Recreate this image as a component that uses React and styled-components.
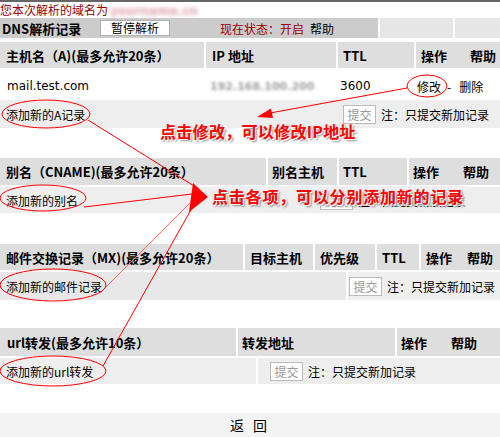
import React from 'react';
import styled, { createGlobalStyle } from 'styled-components';

const GlobalStyle = createGlobalStyle`
  html, body {
    margin: 0;
    padding: 0;
    background: #ffffff;
  }
  body {
    font-family: "Noto Sans CJK SC", "DejaVu Sans", sans-serif;
    font-size: 12px;
    color: #000;
  }
`;

const Page = styled.div`
  position: relative;
  width: 500px;
  height: 437px;
  overflow: hidden;
`;

const TopRule = styled.div`
  height: 2px;
  background: #666666;
`;

const DomainLine = styled.div`
  height: 16px;
  line-height: 16px;
  color: #990000;
  white-space: nowrap;
`;

const Blurred = styled.span`
  display: inline-block;
  font-family: "DejaVu Sans", sans-serif;
  font-size: ${(p) => p.$size || 12}px;
  font-weight: 700;
  color: ${(p) => p.$color};
  filter: blur(${(p) => p.$blur || 1.5}px);
  margin-left: ${(p) => p.$offset || 0}px;
`;

const StatusBar = styled.div`
  display: grid;
  grid-template-columns: 378px 73px 1fr;
  column-gap: 2px;
  height: 20px;
`;

const StatusMain = styled.div`
  display: flex;
  align-items: center;
  padding-left: 2px;
  background: #cccccc;
  white-space: nowrap;
`;

const StatusFiller = styled.div`
  background: #e6e6e6;
`;

const BarTitle = styled.span`
  width: 98px;
  font-size: 13px;
  font-weight: 700;
`;

const PauseButton = styled.span`
  box-sizing: border-box;
  width: 70px;
  height: 16px;
  line-height: 14px;
  text-align: center;
  background: #ffffff;
  border: 1px solid #b0b0b0;
`;

const StateText = styled.span`
  margin-left: 50px;
  color: #990000;
`;

const HelpLink = styled.span`
  margin-left: 6px;
`;

const Section = styled.div`
  display: grid;
  row-gap: 2px;
  margin-top: ${(p) => p.$top}px;
`;

const Row = styled.div`
  display: grid;
  grid-template-columns: ${(p) => p.$cols};
  column-gap: ${(p) => (p.$gap === undefined ? 2 : p.$gap)}px;
  height: ${(p) => p.$height}px;
`;

const HeadCell = styled.div`
  display: flex;
  align-items: center;
  gap: ${(p) => p.$gap || 0}px;
  padding-left: ${(p) => (p.$pad === undefined ? 5 : p.$pad)}px;
  background: #dedede;
  font-size: 13px;
  font-weight: 700;
  white-space: nowrap;
`;

const DataCell = styled.div`
  display: flex;
  align-items: center;
  padding: 4px 0 0 ${(p) => p.$pad || 0}px;
  font-family: ${(p) => (p.$latin ? '"DejaVu Sans", sans-serif' : 'inherit')};
  white-space: nowrap;
`;

const ActionLink = styled.span`
  margin-left: ${(p) => p.$gap || 0}px;
`;

const AddCell = styled.div`
  display: flex;
  align-items: center;
  gap: 5px;
  padding-left: ${(p) => p.$pad || 0}px;
  background: ${(p) => p.$bg || '#eeeeee'};
  white-space: nowrap;
`;

const SubmitButton = styled.span`
  box-sizing: border-box;
  display: inline-flex;
  align-items: center;
  justify-content: center;
  width: 33px;
  height: 19px;
  background: #ffffff;
  border: 1px solid #bbbbbb;
  color: #999999;
  font-size: 12px;
`;

const Note = styled.span`
  color: #000;
`;

const Footer = styled.div`
  margin-top: 29px;
  height: 24px;
  line-height: 24px;
  background: #f4f4f4;
  text-align: center;
  font-size: 14px;
  letter-spacing: 3px;
`;

const Overlay = styled.svg`
  position: absolute;
  left: 0;
  top: 0;
  pointer-events: none;
`;

const Callout = styled.div`
  position: absolute;
  left: ${(p) => p.$x}px;
  top: ${(p) => p.$y}px;
  height: 20px;
  line-height: 20px;
  padding-right: 2px;
  color: #ff0000;
  font-size: 16px;
  font-weight: 700;
  letter-spacing: ${(p) => p.$spacing || 0}px;
  white-space: nowrap;
  background: ${(p) => p.$veil || 'transparent'};
  text-shadow: 1px 1px 0 #ffffff, 2px 2px 2px rgba(0, 0, 0, 0.45);
`;

function AddRow({ cols, gap, label, pad, leftBg, rightBg }) {
  return (
    <Row $cols={cols} $gap={gap} $height={28}>
      <AddCell $pad={6} $bg={leftBg}>{label}</AddCell>
      <AddCell $pad={pad} $bg={rightBg}>
        <SubmitButton>提交</SubmitButton>
        <Note>注：只提交新加记录</Note>
      </AddCell>
    </Row>
  );
}

function Annotations() {
  return (
    <Overlay width="500" height="437" viewBox="0 0 500 437">
      <g fill="none" stroke="#ff0000" strokeWidth="1">
        <ellipse cx="46" cy="114" rx="44" ry="14" />
        <ellipse cx="427" cy="86" rx="20" ry="11" />
        <ellipse cx="43" cy="198" rx="43" ry="13" />
        <ellipse cx="53" cy="285" rx="53" ry="16" />
        <ellipse cx="53" cy="371" rx="53" ry="15" />
        <line x1="407" y1="88" x2="270" y2="113" />
        <line x1="88" y1="120" x2="194" y2="186" />
        <line x1="84" y1="207" x2="192" y2="194" />
        <line x1="103" y1="366" x2="192" y2="208" />
        <line x1="106" y1="287" x2="190" y2="203" stroke="#ff6666" />
      </g>
      <g fill="#ff0000">
        <polygon points="257,117 271,108.5 273,118" />
        <polygon points="193,183 208,197 189,212" />
      </g>
    </Overlay>
  );
}

export default function App() {
  return (
    <Page>
      <GlobalStyle />
      <TopRule />
      <DomainLine>
        您本次解析的域名为
        <Blurred $color="#dda0ab" $blur={2} $offset={2}>
          yourname.cn
        </Blurred>
      </DomainLine>

      <StatusBar>
        <StatusMain>
          <BarTitle>DNS解析记录</BarTitle>
          <PauseButton>暂停解析</PauseButton>
          <StateText>现在状态：开启</StateText>
          <HelpLink>帮助</HelpLink>
        </StatusMain>
        <StatusFiller />
        <StatusFiller />
      </StatusBar>

      {/* A 记录 */}
      <Section $top={4}>
        <Row $cols="204px 130px 76px 1fr" $height={26}>
          <HeadCell $pad={6}>主机名（A)(最多允许20条）</HeadCell>
          <HeadCell $pad={6}>IP 地址</HeadCell>
          <HeadCell>TTL</HeadCell>
          <HeadCell $gap={23}>
            <span>操作</span>
            <span>帮助</span>
          </HeadCell>
        </Row>
        <Row $cols="204px 130px 76px 1fr" $height={28}>
          <DataCell $pad={7} $latin>mail.test.com</DataCell>
          <DataCell $pad={4}>
            <Blurred $color="#a0a0a0" $blur={1.8} $size={11}>192.168.100.200</Blurred>
          </DataCell>
          <DataCell $pad={2} $latin>3600</DataCell>
          <DataCell $pad={1}>
            <span>修改</span>
            <ActionLink $gap={6}>-</ActionLink>
            <ActionLink $gap={8}>删除</ActionLink>
          </DataCell>
        </Row>
        <AddRow cols="339px 1fr" gap={0} label="添加新的A记录" pad={4} />
      </Section>

      {/* CNAME 记录 */}
      <Section $top={30}>
        <Row $cols="266px 69px 68px 1fr" $height={27}>
          <HeadCell $pad={6}>别名（CNAME)(最多允许20条）</HeadCell>
          <HeadCell $pad={4}>别名主机</HeadCell>
          <HeadCell $pad={4}>TTL</HeadCell>
          <HeadCell $pad={4} $gap={24}>
            <span>操作</span>
            <span>帮助</span>
          </HeadCell>
        </Row>
        <Row $cols="318px 1fr" $gap={0} $height={26}>
          <AddCell $pad={6}>添加新的别名</AddCell>
          <AddCell $pad={2}>
            <SubmitButton>提交</SubmitButton>
            <Note>注：只提交新加记录</Note>
          </AddCell>
        </Row>
      </Section>

      {/* MX 记录 */}
      <Section $top={31}>
        <Row $cols="243px 68px 60px 42px 1fr" $height={26}>
          <HeadCell $pad={6}>邮件交换记录（MX)(最多允许20条）</HeadCell>
          <HeadCell>目标主机</HeadCell>
          <HeadCell>优先级</HeadCell>
          <HeadCell>TTL</HeadCell>
          <HeadCell $gap={15}>
            <span>操作</span>
            <span>帮助</span>
          </HeadCell>
        </Row>
        <AddRow
          cols="346px 1fr"
          gap={2}
          label="添加新的邮件记录"
          pad={1}
          leftBg="#e8e8e8"
          rightBg="#efefef"
        />
      </Section>

      {/* url 转发 */}
      <Section $top={28}>
        <Row $cols="236px 157px 1fr" $height={28}>
          <HeadCell $pad={7}>url转发(最多允许10条）</HeadCell>
          <HeadCell $pad={4}>转发地址</HeadCell>
          <HeadCell $pad={4} $gap={24}>
            <span>操作</span>
            <span>帮助</span>
          </HeadCell>
        </Row>
        <Row $cols="256px 1fr" $height={26}>
          <AddCell $pad={6}>添加新的url转发</AddCell>
          <AddCell $pad={12}>
            <SubmitButton>提交</SubmitButton>
            <Note>注：只提交新加记录</Note>
          </AddCell>
        </Row>
      </Section>

      <Footer>返 回</Footer>

      <Annotations />
      <Callout $x={160} $y={121} $spacing={0.3}>
        点击修改，可以修改IP地址
      </Callout>
      <Callout $x={212} $y={186} $spacing={0.8} $veil="rgba(238, 238, 238, 0.85)">
        点击各项，可以分别添加新的记录
      </Callout>
    </Page>
  );
}
